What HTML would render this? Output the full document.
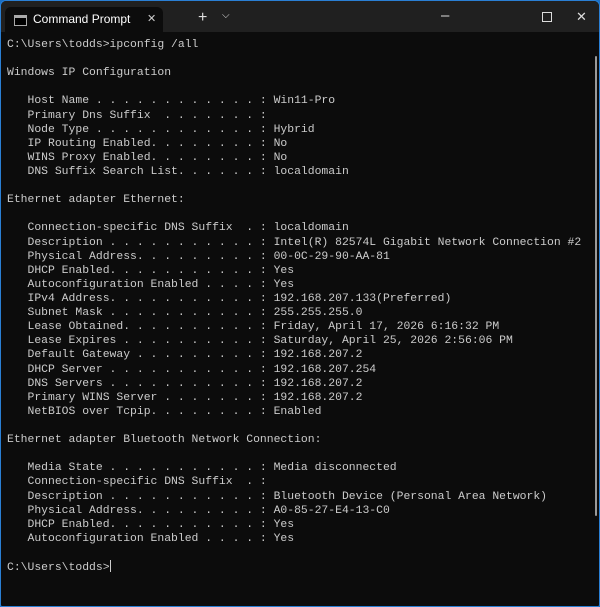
<!DOCTYPE html>
<html><head><style>
html,body{margin:0;padding:0;background:#1a6fc4;}
.win{position:absolute;left:0;top:0;width:600px;height:607px;box-sizing:border-box;border:1px solid #2a7fd4;border-radius:6px 6px 2px 2px;background:#0c0c0c;overflow:hidden;}
.tb{position:absolute;left:0;top:0;width:600px;height:31px;background:#202020;}
.tab{position:absolute;left:4px;top:6px;width:158px;height:25px;background:#0c0c0c;border-radius:6px 6px 0 0;}
.tab .t{position:absolute;left:28px;top:5px;color:#fff;font:12px "Liberation Sans",sans-serif;}
.tab .ic{position:absolute;left:9px;top:8px;width:11px;height:9px;border:1px solid #aaa;background:#000;}
.tab .ic:before{content:"";position:absolute;left:0;top:0;width:11px;height:2px;background:#aaa;}
.tab .x{position:absolute;left:142px;top:5px;color:#ccc;font:11px "Liberation Sans",sans-serif;}
.tb .s{position:absolute;color:#ddd;font:15px "Liberation Sans",sans-serif;}
pre{position:absolute;left:6px;top:37px;margin:0;color:#cccccc;font:11.4px/14.11px "Liberation Mono",monospace;}
.sb{position:absolute;left:594px;top:55px;width:2px;height:460px;background:#9a9a9a;border-radius:1px;}
</style></head><body>
<div class="win">
<div class="tb">
<div class="tab"><div class="ic"></div><div class="t">Command Prompt</div><div class="x">✕</div></div>
<div class="s" style="left:197px;top:8px;font-size:16px">+</div>
<div class="s" style="left:221px;top:9px;font-size:10px">⌵</div>
<div class="s" style="left:440px;top:6px">–</div>
<div style="position:absolute;left:541px;top:11px;width:8px;height:8px;border:1px solid #ddd"></div>
<div class="s" style="left:575px;top:8px;font-size:13px">✕</div>
</div>
<pre>C:\Users\todds&gt;ipconfig /all

Windows IP Configuration

   Host Name . . . . . . . . . . . . : Win11-Pro
   Primary Dns Suffix  . . . . . . . :
   Node Type . . . . . . . . . . . . : Hybrid
   IP Routing Enabled. . . . . . . . : No
   WINS Proxy Enabled. . . . . . . . : No
   DNS Suffix Search List. . . . . . : localdomain

Ethernet adapter Ethernet:

   Connection-specific DNS Suffix  . : localdomain
   Description . . . . . . . . . . . : Intel(R) 82574L Gigabit Network Connection #2
   Physical Address. . . . . . . . . : 00-0C-29-90-AA-81
   DHCP Enabled. . . . . . . . . . . : Yes
   Autoconfiguration Enabled . . . . : Yes
   IPv4 Address. . . . . . . . . . . : 192.168.207.133(Preferred)
   Subnet Mask . . . . . . . . . . . : 255.255.255.0
   Lease Obtained. . . . . . . . . . : Friday, April 17, 2026 6:16:32 PM
   Lease Expires . . . . . . . . . . : Saturday, April 25, 2026 2:56:06 PM
   Default Gateway . . . . . . . . . : 192.168.207.2
   DHCP Server . . . . . . . . . . . : 192.168.207.254
   DNS Servers . . . . . . . . . . . : 192.168.207.2
   Primary WINS Server . . . . . . . : 192.168.207.2
   NetBIOS over Tcpip. . . . . . . . : Enabled

Ethernet adapter Bluetooth Network Connection:

   Media State . . . . . . . . . . . : Media disconnected
   Connection-specific DNS Suffix  . :
   Description . . . . . . . . . . . : Bluetooth Device (Personal Area Network)
   Physical Address. . . . . . . . . : A0-85-27-E4-13-C0
   DHCP Enabled. . . . . . . . . . . : Yes
   Autoconfiguration Enabled . . . . : Yes

C:\Users\todds&gt;<span style="display:inline-block;width:1px;height:12px;background:#ccc;vertical-align:-2px"></span></pre>
<div class="sb"></div>
</div>
</body></html>
